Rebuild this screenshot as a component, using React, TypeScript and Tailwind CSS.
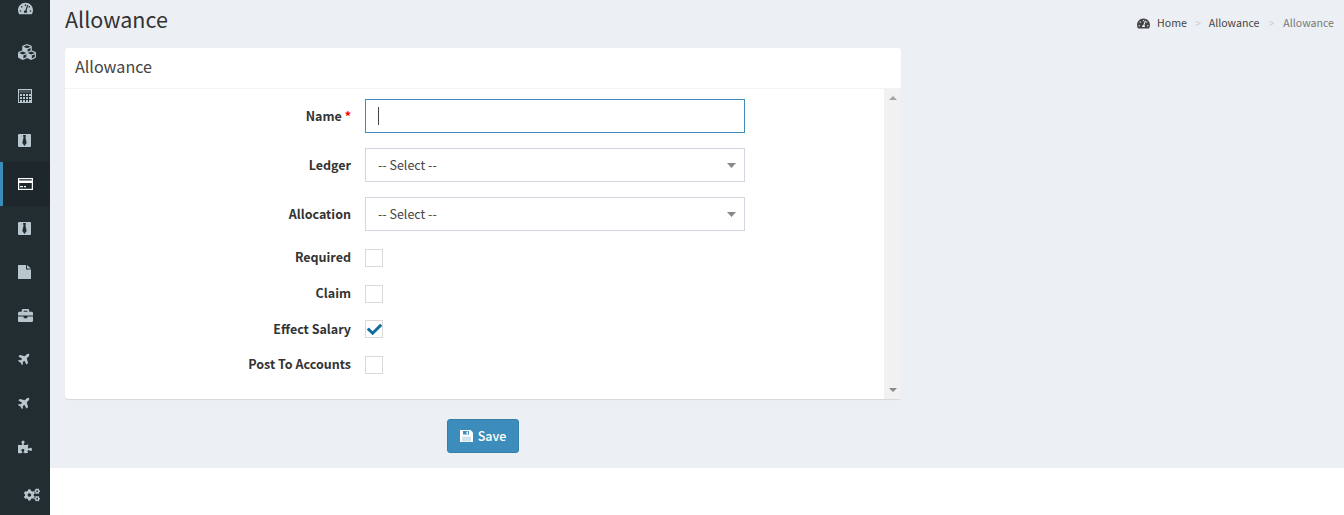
import React from "react";
import { FaTachometerAlt, FaCubes, FaBriefcase, FaPlane, FaPuzzlePiece, FaCogs, FaCheck } from "react-icons/fa";

const font = { fontFamily: '"Noto Sans CJK SC", "Noto Sans", sans-serif' };

function TieIcon() {
  return (
    <span className="flex h-[13px] w-[13px] items-center justify-center rounded-[1px] bg-[#b8c7ce]">
      <svg viewBox="0 0 12 12" className="h-[13px] w-[13px]">
        <path d="M4.6 1h2.8L6.9 3.2 8 8.4 6 11 4 8.4 5.1 3.2z" fill="#222d32" />
      </svg>
    </span>
  );
}

const CalcIcon = () => (
  <svg viewBox="0 0 14 14" className="h-[14px] w-[14px]">
    <rect x="0.5" y="0.5" width="13" height="13" fill="none" stroke="#b8c7ce" />
    <rect x="1" y="1" width="12" height="3" fill="#b8c7ce" opacity="0.25" />
    {[5, 8, 11].map((y) =>
      [2, 5, 8, 11].map((x) => <rect key={`${x}-${y}`} x={x} y={y} width="2" height="2" fill="#b8c7ce" />)
    )}
  </svg>
);

const CardIcon = () => (
  <svg viewBox="0 0 15 12" className="h-[12px] w-[15px]">
    <rect x="0.6" y="0.6" width="13.8" height="10.8" fill="none" stroke="#fff" strokeWidth="1.2" />
    <rect x="1" y="2.5" width="13" height="2.5" fill="#fff" />
    <rect x="2" y="8" width="3" height="1.2" fill="#fff" />
    <rect x="6" y="8" width="2" height="1.2" fill="#fff" />
  </svg>
);

const FileIcon = () => (
  <svg viewBox="0 0 13 14" className="h-[14px] w-[13px]">
    <path d="M0 0h8v4.5h5V14H0zM9 0l4 3.5H9z" fill="#b8c7ce" />
  </svg>
);

const SaveIcon = () => (
  <svg viewBox="0 0 13 12" className="h-[12px] w-[13px]">
    <path d="M0 0h10.5L13 2.5V12H0z" fill="#fff" />
    <rect x="3" y="1" width="6" height="3.5" fill="#3c8dbc" />
    <rect x="6.5" y="1.5" width="1.5" height="2.5" fill="#fff" />
    <rect x="2" y="6.5" width="9" height="5" fill="#cfe3ef" />
  </svg>
);

const Row = ({ children, active }: { children: React.ReactNode; active?: boolean }) => (
  <div className={active ? "flex h-[44px] items-center border-l-[3px] border-[#3c8dbc] bg-[#1e282c] pl-[15px] text-white" : "flex h-[44px] items-center pl-[18px] text-[#b8c7ce]"}>
    {children}
  </div>
);

const Arrow = ({ dir }: { dir: "up" | "down" }) => (
  <svg viewBox="0 0 8 4" className="h-[4px] w-[8px]">
    <path d={dir === "up" ? "M4 0l4 4H0z" : "M0 0h8L4 4z"} fill={dir === "up" ? "#a3a3a3" : "#8a8a8a"} />
  </svg>
);

const SelectBox = () => (
  <div className="flex h-[34px] w-[380px] items-center justify-between border border-[#d2d6de] bg-white pl-[12px] pr-[8px] text-[12.5px] text-[#444]">
    <span>-- Select --</span>
    <svg viewBox="0 0 9 5" className="h-[5px] w-[9px]"><path d="M0 0h9L4.5 5z" fill="#888" /></svg>
  </div>
);

const Label = ({ children, cls = "" }: { children: React.ReactNode; cls?: string }) => (
  <div className={`w-[286px] text-right text-[12.5px] font-bold leading-[18px] text-[#333] ${cls}`}>{children}</div>
);

const CheckRow = ({ label, checked, cls, labelCls }: { label: string; checked?: boolean; cls: string; labelCls?: string }) => (
  <div className={`flex items-center gap-[14px] ${cls}`}>
    <Label cls={labelCls}>{label}</Label>
    <div className="flex h-[18px] w-[18px] items-center justify-center border border-[#d9d9d9] bg-white">
      {checked && <FaCheck className="text-[15px] text-[#0e6ea0]" />}
    </div>
  </div>
);

export default function App() {
  return (
    <div className="flex h-[515px] w-[1344px] overflow-hidden bg-white" style={font}>
      <aside className="h-[515px] w-[50px] shrink-0 overflow-hidden bg-[#222d32]">
        <div className="-mt-[14px]">
          <Row><FaTachometerAlt className="text-[15px]" /></Row>
          <Row><FaCubes className="text-[18px]" /></Row>
          <Row><CalcIcon /></Row>
          <Row><TieIcon /></Row>
          <Row active><CardIcon /></Row>
          <Row><TieIcon /></Row>
          <Row><FileIcon /></Row>
          <Row><FaBriefcase className="-mt-[2px] text-[15px]" /></Row>
          <Row><FaPlane className="-mt-[3px] -rotate-45 text-[13px]" /></Row>
          <Row><FaPlane className="-mt-[3px] -rotate-45 text-[13px]" /></Row>
          <Row><FaPuzzlePiece className="-mt-[2px] text-[14px]" /></Row>
          <div className="flex h-[48px] items-center pl-[24px] pt-[1px] text-[#b8c7ce]"><FaCogs className="text-[16px]" /></div>
        </div>
      </aside>
      <main className="h-[468px] flex-1 bg-[#ecf0f5] pl-[15px] pr-[10px]">
        <div className="flex h-[48px] items-start justify-between">
          <h1 className="pt-[4px] text-[21.5px] leading-[30px] text-[#333]">Allowance</h1>
          <div className="flex items-center pt-[14px] text-[10.6px] leading-[18px] text-[#444]">
            <FaTachometerAlt className="mr-[7px] text-[13px]" />
            <span>Home</span>
            <span className="mx-[8px] text-[#ccc]">&gt;</span>
            <span>Allowance</span>
            <span className="mx-[9px] text-[#ccc]">&gt;</span>
            <span className="text-[#777]">Allowance</span>
          </div>
        </div>
        <section className="h-[351px] w-[836px] rounded-[3px] bg-white shadow-[0_1px_1px_rgba(0,0,0,0.1)]">
          <div className="flex h-[41px] items-center border-b border-[#f4f4f4] pb-[3px] pl-[10px] text-[16.1px] text-[#444]">Allowance</div>
          <div className="flex h-[310px]">
            <div className="flex-1 pt-[10px]">
              <div className="flex items-center gap-[14px]">
                <Label>Name <span className="text-[#f00]">*</span></Label>
                <div className="flex h-[34px] w-[380px] items-center border border-[#3c8dbc] bg-white pl-[12px]">
                  <span className="h-[18px] w-px bg-[#444]" />
                </div>
              </div>
              <div className="mt-[15px] flex items-center gap-[14px]"><Label>Ledger</Label><SelectBox /></div>
              <div className="mt-[15px] flex items-center gap-[14px]"><Label>Allocation</Label><SelectBox /></div>
              <CheckRow label="Required" cls="mt-[18px]" labelCls="-mt-[2px]" />
              <CheckRow label="Claim" cls="mt-[18px]" labelCls="-mt-[2px]" />
              <CheckRow label="Effect Salary" checked cls="mt-[17px]" />
              <CheckRow label="Post To Accounts" cls="mt-[18px]" labelCls="-mt-[2px]" />
            </div>
            <div className="flex w-[17px] flex-col items-center justify-between bg-[#f1f1f1] py-[7px]">
              <Arrow dir="up" />
              <Arrow dir="down" />
            </div>
          </div>
        </section>
        <div className="pl-[382px] pt-[20px]">
          <button className="flex h-[34px] w-[72px] items-center justify-center gap-[5px] rounded-[3px] border border-[#367fa9] bg-[#3c8dbc] text-[12.5px] font-medium text-white">
            <SaveIcon />
            <span>Save</span>
          </button>
        </div>
      </main>
    </div>
  );
}
